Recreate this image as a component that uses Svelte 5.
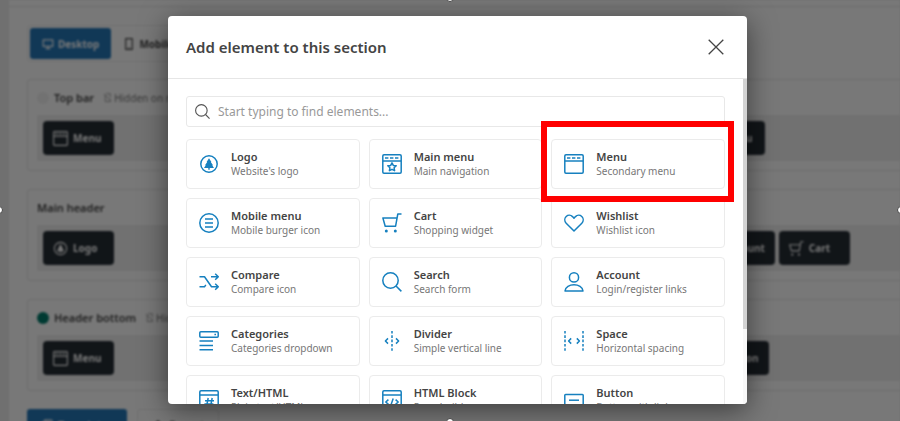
<script lang="ts">
    let query = $state('');

    const elements = [
        { icon: 'logo', title: 'Logo', text: "Website's logo" },
        { icon: 'mainmenu', title: 'Main menu', text: 'Main navigation' },
        { icon: 'menu', title: 'Menu', text: 'Secondary menu', marked: true },
        { icon: 'burger', title: 'Mobile menu', text: 'Mobile burger icon' },
        { icon: 'cart', title: 'Cart', text: 'Shopping widget' },
        { icon: 'heart', title: 'Wishlist', text: 'Wishlist icon' },
        { icon: 'compare', title: 'Compare', text: 'Compare icon' },
        { icon: 'search', title: 'Search', text: 'Search form' },
        { icon: 'account', title: 'Account', text: 'Login/register links' },
        { icon: 'categories', title: 'Categories', text: 'Categories dropdown' },
        { icon: 'divider', title: 'Divider', text: 'Simple vertical line' },
        { icon: 'space', title: 'Space', text: 'Horizontal spacing' },
        { icon: 'text', title: 'Text/HTML', text: 'Plain text/HTML' },
        { icon: 'html', title: 'HTML Block', text: 'Page builder' },
        { icon: 'button', title: 'Button', text: 'Button with link' },
    ];

    const rows = [
        { title: 'Top bar', dot: 'light', hidden: true, left: { icon: 'menu', label: 'Menu' }, right: [{ icon: 'menu', label: 'Menu' }] },
        { title: 'Main header', dot: '', hidden: false, left: { icon: 'logo', label: 'Logo' }, right: [{ icon: 'account', label: 'Account' }, { icon: 'cart', label: 'Cart' }] },
        { title: 'Header bottom', dot: 'teal', hidden: true, left: { icon: 'menu', label: 'Menu' }, right: [{ icon: 'button', label: 'Button' }] },
    ];

    let found = $derived(elements.filter((e) => e.title.toLowerCase().includes(query.toLowerCase())));
</script>

{#snippet icon(name: string)}
    <svg class="icon" viewBox="0 0 20 20" aria-hidden="true">
        {#if name === 'logo'}
            <circle cx="10" cy="10" r="8.2" />
            <path class="solid" d="M10 4.2 L12.4 8 H11.8 L14 11.2 H13.2 L15 14 H10.7 V15.8 H9.3 V14 H5 L6.8 11.2 H6 L8.2 8 H7.6 Z" />
        {:else if name === 'mainmenu' || name === 'menu'}
            <rect x="0.8" y="0.8" width="18.4" height="18.4" rx="1.2" />
            <path d="M1 7 H19" />
            <path d="M3 4 H17" stroke-dasharray="3.4 1.6" />
            {#if name === 'mainmenu'}
                <path d="M10 8.8 L11.3 11.4 L14.2 11.8 L12.1 13.8 L12.6 16.7 L10 15.3 L7.4 16.7 L7.9 13.8 L5.8 11.8 L8.7 11.4 Z" />
            {/if}
        {:else if name === 'burger'}
            <circle cx="10" cy="10" r="9.2" />
            <path d="M6 6 H14 M6 10 H14 M6 14 H14" />
        {:else if name === 'cart'}
            <path d="M19.5 1 H15.8 L13.6 13.2 H3.2 L0.9 5 H15" />
            <circle class="solid" cx="4.3" cy="18" r="1.5" />
            <circle class="solid" cx="13.3" cy="18" r="1.5" />
        {:else if name === 'heart'}
            <path d="M10 18 L2.2 10.2 C0.3 8.1 0.4 5.2 2.2 3.5 C4 1.8 6.8 1.9 8.5 3.6 L10 5.3 L11.5 3.6 C13.2 1.9 16 1.8 17.8 3.5 C19.6 5.2 19.7 8.1 17.8 10.2 Z" />
        {:else if name === 'compare'}
            <path d="M0.5 4.8 H5.5 L12.5 14.8 H19 M0.5 14.8 H5.5 L6.8 12.8 M12 4.8 H19 M16.2 1.8 L19.3 4.8 L16.2 7.8 M16.2 11.8 L19.3 14.8 L16.2 17.8" />
        {:else if name === 'search'}
            <circle cx="8.5" cy="8.5" r="7.7" />
            <path d="M14 14 L19.4 19.4" />
        {:else if name === 'account'}
            <circle cx="10" cy="5.4" r="4.6" />
            <path d="M1 19 C1.6 10.6 18.4 10.6 19 19 Z" />
        {:else if name === 'categories'}
            <rect x="0.8" y="0.8" width="18.4" height="5.4" rx="1" />
            <path d="M15.4 3.5 H17 M0.5 10 H14 M0.5 14.4 H14 M0.5 18.8 H14" />
        {:else if name === 'divider'}
            <path d="M10 0 V20" stroke-dasharray="2.6 1.7" />
            <path d="M6 7.4 L3.4 10 L6 12.6 M14 7.4 L16.6 10 L14 12.6" />
        {:else if name === 'space'}
            <path d="M1 0 V20 M19 0 V20" stroke-dasharray="2.6 1.7" />
            <path d="M7.2 7.4 L4.6 10 L7.2 12.6 M12.8 7.4 L15.4 10 L12.8 12.6" />
        {:else if name === 'text' || name === 'html'}
            <rect x="0.8" y="0.8" width="18.4" height="18.4" rx="1.2" />
            <path d="M1 5 H19" />
            {#if name === 'text'}
                <path d="M9.2 8 L7.4 17 M13.2 8 L11.4 17 M6 10.8 H15 M5.4 14 H14.4" />
            {:else}
                <path d="M6.4 9.6 L3.8 12 L6.4 14.4 M13.6 9.6 L16.2 12 L13.6 14.4 M11.2 8.6 L8.8 15.4" />
            {/if}
        {:else if name === 'button'}
            <rect x="0.8" y="4.4" width="18.4" height="12" rx="0.8" />
            <path d="M5 10.2 H15" />
        {:else if name === 'desktop'}
            <path d="M2 3 H18 V14 H2 Z M6 17.6 H14 M10 14 V17" />
        {:else if name === 'phone'}
            <path d="M4.5 1 H15.5 V19 H4.5 Z M9 16.4 H11" />
        {:else if name === 'hidden'}
            <path d="M5 4 V19 H16 V14 M7 1.5 H16 V10 M2 2 L18 18" />
        {:else if name === 'layout'}
            <path d="M2 5 H14 V18 H2 Z M6 5 V2 H18 V14 H14 M2 9 H14" />
        {:else if name === 'upload'}
            <path d="M10 18 V3 M4 9 L10 3 L16 9" />
        {/if}
    </svg>
{/snippet}

<div class="page">
    <div class="builder">
        <div class="topline"></div>
        <div class="tabs">
            <button class="tab active">{@render icon('desktop')}Desktop</button>
            <button class="tab">{@render icon('phone')}Mobile</button>
        </div>

        {#each rows as row}
            <section class="row">
                <div class="row-title">
                    {#if row.dot}<span class="dot {row.dot}"></span>{/if}
                    {row.title}
                    {#if row.hidden}
                        <span class="note">{@render icon('hidden')}Hidden on mobile</span>
                    {/if}
                </div>
                <div class="strip">
                    <div class="group">
                        <button class="chip">{@render icon(row.left.icon)}{row.left.label}</button>
                    </div>
                    <div class="group">
                        {#each row.right as item}
                            <button class="chip">{@render icon(item.icon)}{item.label}</button>
                        {/each}
                    </div>
                </div>
            </section>
        {/each}

        <div class="actions">
            <button class="action primary">{@render icon('layout')}Templates</button>
            <button class="action">{@render icon('upload')}Export</button>
        </div>
    </div>

    <div class="overlay">
        <div class="modal" role="dialog" aria-labelledby="modal-title">
            <header>
                <h2 id="modal-title">Add element to this section</h2>
                <button class="close" aria-label="Close">
                    <svg viewBox="0 0 16 16"><path d="M0.7 0.7 L15.3 15.3 M15.3 0.7 L0.7 15.3" /></svg>
                </button>
            </header>
            <div class="body">
                <div class="content">
                    <label class="search">
                        {@render icon('search')}
                        <input type="text" aria-label="Find elements" placeholder="Start typing to find elements..." bind:value={query} />
                    </label>
                    <div class="grid">
                        {#each found as el}
                            <button class="card" class:marked={el.marked}>
                                {@render icon(el.icon)}
                                <span class="info">
                                    <strong>{el.title}</strong>
                                    <span>{el.text}</span>
                                </span>
                            </button>
                        {/each}
                    </div>
                </div>
                <div class="scrollbar"><div class="thumb"></div></div>
            </div>
        </div>
    </div>

    <span class="handle top"></span>
    <span class="handle bottom"></span>
    <span class="handle left"></span>
    <span class="handle right"></span>
</div>

<style>
    :global(body) {
        margin: 0;
        overflow: hidden;
    }
    .page {
        position: relative;
        height: 100vh;
        overflow: hidden;
        background: #eee;
        font-family: "Noto Sans", "Open Sans", sans-serif;
        font-size: 11px;
        color: #444;
    }
    button {
        font: inherit;
        color: inherit;
        border: 0;
        padding: 0;
        background: none;
        cursor: pointer;
    }
    .icon {
        flex: none;
        width: 20px;
        height: 20px;
        fill: none;
        stroke: currentColor;
        stroke-width: 1.5;
        stroke-linejoin: round;
        overflow: visible;
    }
    .icon .solid {
        fill: currentColor;
        stroke: none;
    }

    /* header builder behind the popup */
    .builder {
        margin-left: 9px;
        padding-left: 18px;
        background: #fff;
        filter: blur(1px);
    }
    .topline {
        height: 6px;
        margin: 0 0 18px -18px;
        border-bottom: 1px solid #e6e6e6;
    }
    .tabs {
        display: inline-flex;
        padding: 2px;
        margin-bottom: 17px;
        border: 1px solid #eee;
        border-radius: 4px;
        vertical-align: top;
    }
    .tab {
        display: flex;
        align-items: center;
        gap: 4px;
        height: 31px;
        padding: 0 12px;
        border-radius: 3px;
        font-size: 10px;
        font-weight: 700;
    }
    .tab .icon,
    .action .icon {
        width: 12px;
        height: 12px;
        stroke-width: 2;
    }
    .active,
    .primary {
        background: #2477b8;
        color: #fff;
    }
    .row {
        margin-bottom: 18px;
        padding: 0 0 9px 9px;
        border: 1px solid #e6e6e6;
        border-right: 0;
        border-radius: 4px 0 0 4px;
    }
    .row-title {
        display: flex;
        align-items: center;
        gap: 5px;
        height: 35px;
        font-weight: 600;
    }
    .dot {
        width: 12px;
        height: 12px;
        border-radius: 50%;
    }
    .light {
        background: #f2f2f2;
    }
    .teal {
        background: #007b6b;
    }
    .note {
        display: flex;
        align-items: center;
        gap: 2px;
        margin-left: 4px;
        font-size: 10px;
        font-weight: 400;
        color: #777;
    }
    .note .icon {
        width: 9px;
        height: 9px;
    }
    .strip {
        display: grid;
        grid-template-columns: 1fr 206px;
        padding: 6px 0 6px 6px;
        background: #f0f0f0;
    }
    .group {
        display: flex;
        gap: 4px;
    }
    .chip {
        display: flex;
        align-items: center;
        gap: 5px;
        min-width: 71px;
        height: 34px;
        padding: 0 10px;
        border-radius: 4px;
        background: #252d34;
        color: #fff;
        font-size: 10px;
        font-weight: 700;
    }
    .chip .icon {
        width: 15px;
        height: 15px;
    }
    .actions {
        display: flex;
        gap: 10px;
    }
    .action {
        display: flex;
        align-items: center;
        gap: 5px;
        height: 31px;
        padding: 0 14px;
        border: 1px solid #eee;
        border-radius: 3px;
        font-weight: 600;
    }
    .primary {
        border: 0;
    }

    .overlay {
        position: absolute;
        inset: 0;
        display: flex;
        justify-content: center;
        padding: 16px 0 17px 15px;
        background: rgba(0, 0, 0, 0.53);
    }
    .modal {
        display: flex;
        flex-direction: column;
        width: min(579px, 100%);
        border-radius: 4px;
        overflow: hidden;
        background: #fff;
        box-shadow: 0 6px 28px rgba(0, 0, 0, 0.5);
    }
    header {
        display: flex;
        align-items: center;
        justify-content: space-between;
        flex: none;
        height: 62px;
        padding: 0 23px 0 18px;
        border-bottom: 1px solid #e6e6e6;
    }
    h2 {
        margin: 0;
        font-size: 15px;
        font-weight: 600;
    }
    .close {
        display: flex;
    }
    .close svg {
        width: 16px;
        height: 16px;
        stroke: #444;
        stroke-width: 1.3;
    }
    .body {
        display: flex;
        flex: 1;
        min-height: 0;
    }
    .content {
        flex: 1;
        overflow: hidden;
        padding: 17px 18px;
    }
    .search {
        display: flex;
        align-items: center;
        gap: 8px;
        height: 29px;
        margin-bottom: 12px;
        padding: 0 8px;
        border: 1px solid #e8e8e8;
        border-radius: 3px;
    }
    .search .icon {
        width: 15px;
        height: 15px;
        color: #555;
    }
    .search input {
        flex: 1;
        border: 0;
        padding: 0;
        outline: 0;
        background: none;
        font: inherit;
        font-size: 12px;
    }
    .search input::placeholder {
        color: #999;
    }
    .grid {
        display: grid;
        grid-template-columns: repeat(3, 1fr);
        grid-auto-rows: 50px;
        gap: 9px;
    }
    .card {
        position: relative;
        display: flex;
        align-items: center;
        gap: 12px;
        padding: 0 12px;
        border: 1px solid #ebebeb;
        border-radius: 4px;
        text-align: left;
    }
    .card .icon {
        color: #1680bf;
    }
    .info {
        display: flex;
        flex-direction: column;
        font-size: 10px;
        line-height: 15px;
        white-space: nowrap;
        color: #777;
    }
    .info strong {
        font-size: 11px;
        font-weight: 600;
        color: #444;
    }
    .marked {
        z-index: 1;
    }
    .marked::after {
        content: "";
        position: absolute;
        inset: -19px -10px -14px -11px;
        border: 6px solid #f00;
    }
    .scrollbar {
        width: 4px;
        background: #f8f8f8;
    }
    .thumb {
        height: 77%;
        background: #d3d3d3;
    }

    .handle {
        position: absolute;
        width: 6px;
        height: 6px;
        border: 1px solid #444;
        border-radius: 50%;
        background: #fff;
    }
    .top {
        top: -6px;
        left: calc(50% - 4px);
    }
    .bottom {
        bottom: -5px;
        left: calc(50% - 4px);
    }
    .left {
        left: -5px;
        top: calc(50% - 5px);
    }
    .right {
        right: -5px;
        top: calc(50% - 5px);
    }
</style>
